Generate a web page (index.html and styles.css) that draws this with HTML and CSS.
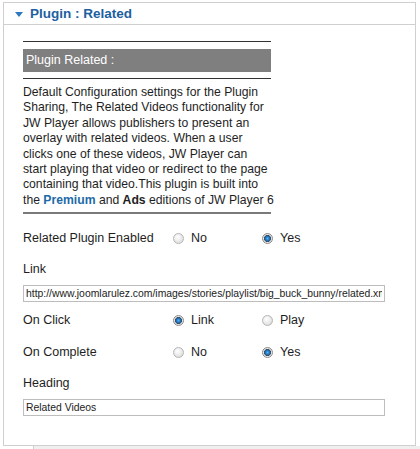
FILE: index.html
```html
<!DOCTYPE html>
<html lang="en">

<head>
    <meta charset="UTF-8">
    <meta name="viewport" content="width=device-width, initial-scale=1.0">
    <title>Plugin : Related</title>
    <link rel="stylesheet" href="styles.css">
</head>

<body>
    <div class="panel">
        <div class="panel-header">
            <span class="toggle"></span>
            <h3>Plugin : Related</h3>
        </div>

        <div class="panel-body">
            <div class="rule"></div>
            <div class="plugin-title">Plugin Related :</div>
            <div class="rule"></div>

            <p class="desc">Default Configuration settings for the Plugin<br>
                Sharing, The Related Videos functionality for<br>
                JW Player allows publishers to present an<br>
                overlay with related videos. When a user<br>
                clicks one of these videos, JW Player can<br>
                start playing that video or redirect to the page<br>
                containing that video.This plugin is built into<br>
                the <a href="#">Premium</a> and <b>Ads</b> editions of JW Player 6</p>

            <div class="rule rule-thick"></div>

            <div class="row">
                <label class="field-label">Related Plugin Enabled</label>
                <label class="opt"><input type="radio" name="enabled"><span>No</span></label>
                <label class="opt"><input type="radio" name="enabled" checked><span>Yes</span></label>
            </div>

            <label class="block-label" for="link">Link</label>
            <input type="text" id="link" class="text-field"
                value="http://www.joomlarulez.com/images/stories/playlist/big_buck_bunny/related.xml">

            <div class="row row-after-input">
                <label class="field-label">On Click</label>
                <label class="opt"><input type="radio" name="onclick" checked><span>Link</span></label>
                <label class="opt"><input type="radio" name="onclick"><span>Play</span></label>
            </div>

            <div class="row">
                <label class="field-label">On Complete</label>
                <label class="opt"><input type="radio" name="oncomplete"><span>No</span></label>
                <label class="opt"><input type="radio" name="oncomplete" checked><span>Yes</span></label>
            </div>

            <label class="block-label" for="heading">Heading</label>
            <input type="text" id="heading" class="text-field" value="Related Videos">
        </div>
    </div>
    <div class="footer-tab"></div>
</body>

</html>
```

FILE: styles.css
```css
body {
    font-family: "Liberation Sans", Arial, sans-serif;
    font-size: 12.5px;
    color: #1e1e1e;
    margin: 0;
    padding: 2px 0 0 3px;
    background-color: white;
}

.panel {
    width: 411px;
    height: 442px;
    border: 1px solid #cfcfcf;
    box-sizing: content-box;
}

.panel-header {
    height: 21px;
    border-bottom: 1px solid #cfcfcf;
    display: flex;
    align-items: center;
    padding-left: 11px;
}

.toggle {
    width: 0;
    height: 0;
    border-left: 4px solid transparent;
    border-right: 4px solid transparent;
    border-top: 5px solid #2a78c0;
    margin-right: 7px;
    margin-top: 1px;
}

.panel-header h3 {
    margin: 0;
    font-size: 13.5px;
    font-weight: bold;
    color: #1d5f9f;
}

.panel-body {
    padding: 16px 0 0 19px;
}

.rule {
    width: 248px;
    border-top: 1px solid #333;
}

.rule-thick {
    border-top: 2px solid #7a7a7a;
}

.plugin-title {
    width: 245px;
    height: 23px;
    line-height: 23px;
    margin: 7px 0 6px 0;
    padding-left: 3px;
    background-color: #7f7f7f;
    color: white;
}

.desc {
    width: 260px;
    margin: 6px 0 4px 0;
    font-size: 12.2px;
    line-height: 15.4px;
    white-space: nowrap;
}

.desc a {
    color: #1d6aa8;
    font-weight: bold;
    text-decoration: none;
}

.row {
    display: flex;
    align-items: center;
    height: 16px;
    margin-top: 16px;
}

.row-after-input {
    margin-top: 10px;
}

.field-label {
    width: 150px;
}

.opt {
    display: flex;
    align-items: center;
    width: 89px;
}

.opt input {
    appearance: none;
    width: 11px;
    height: 11px;
    margin: 0 7px 0 0;
    border: 1px solid #b5b5b5;
    border-radius: 50%;
    background: radial-gradient(circle at 40% 35%, #ffffff 0%, #e6e6e6 60%, #cfcfcf 100%);
}

.opt input:checked {
    border-color: #8a8a8a;
    background: radial-gradient(circle, #5ab3f0 0%, #1a6db8 35%, #3b4d5e 50%, #e8e8e8 60%, #d4d4d4 100%);
}

.block-label {
    display: block;
    line-height: 16px;
    margin-top: 15px;
}

.text-field {
    display: block;
    width: 362px;
    height: 17px;
    box-sizing: border-box;
    margin-top: 8px;
    padding: 0 2px;
    border: 1px solid #bdbdbd;
    font-family: "Liberation Sans", Arial, sans-serif;
    font-size: 10.4px;
    color: #222;
    overflow: hidden;
}

.footer-tab {
    margin-left: 30px;
    height: 4px;
    border-left: 1px solid #cfcfcf;
    background-color: #efefef;
}
```
